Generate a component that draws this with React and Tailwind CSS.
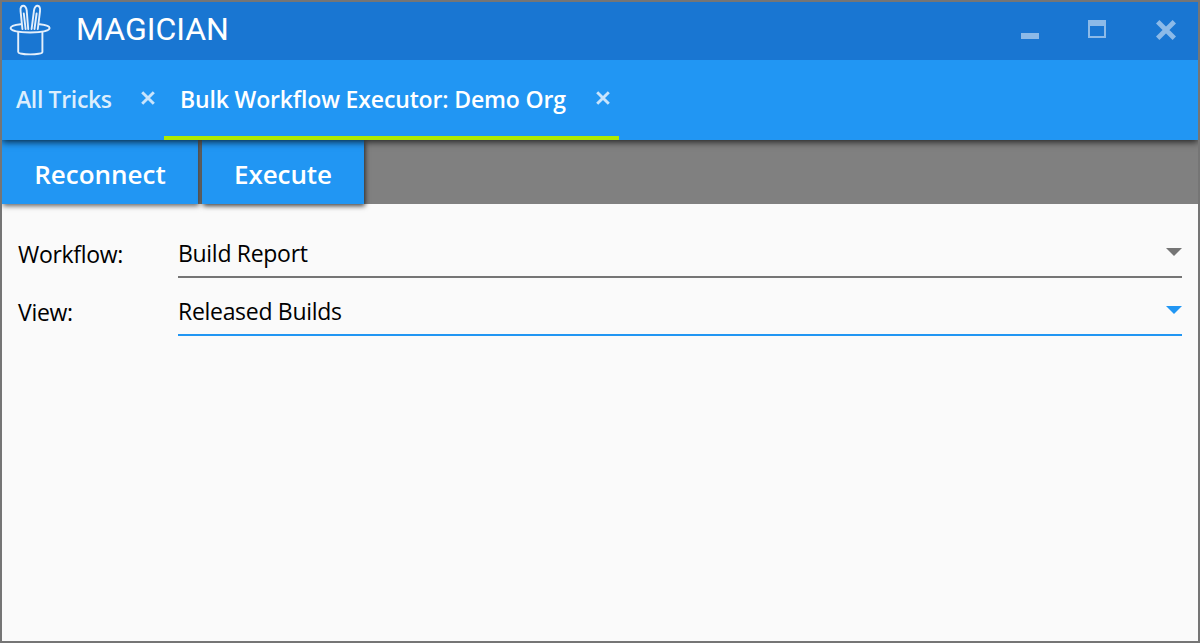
function HatIcon() {
  return (
    <svg className="-mt-[3px] h-[52px] w-[42px]" viewBox="0 0 42 52" fill="none" stroke="#e4effb" strokeWidth="1.9" strokeLinecap="round" strokeLinejoin="round">
      <path d="M13.4 25 11.6 7.3C10.8.4 17-.2 17.7 6.4L19.2 25" />
      <path d="M22.6 25 25 6.4C25.8-.2 31.8.4 31 7.3L28.8 25" />
      <path d="M14.8 9.5 16.6 25M27.6 9.5 25.5 25" />
      <path d="M11.7 20.3C5.5 21 1.6 22.2 1.6 24.1c0 2.7 8.5 4.4 19.6 4.4s19.4-1.7 19.4-4.4c0-1.9-3.7-3.1-9.9-3.8" />
      <path d="M9.2 28.2V48c0 3.2 24.2 3.2 24.2 0V28.2" />
    </svg>
  );
}

function TabClose() {
  return (
    <svg className="mb-[5px] h-[14px] w-[14px]" viewBox="0 0 14 14" stroke="#c8e4fc" strokeWidth="2.9">
      <path d="M1.2 1.2 12.8 12.8M12.8 1.2 1.2 12.8" />
    </svg>
  );
}

function TitleBar() {
  return (
    <header className="relative z-20 flex h-[58px] shrink-0 items-center justify-between bg-[#1976d2]">
      <div className="flex items-center pl-[7px]">
        <HatIcon />
        <h1 className="ml-[25px] -mt-1 font-[Roboto,sans-serif] text-[32px] leading-10 whitespace-nowrap text-white">MAGICIAN</h1>
      </div>
      <div className="flex items-center pr-[22px]">
        <button aria-label="Minimize" className="mt-[10px] mr-[49px] h-[6px] w-[18px] bg-[#8cbae8]" />
        <button aria-label="Maximize" className="mr-[50px] -mt-[4px] h-[18px] w-[18px] border-2 border-t-[6px] border-[#8cbae8]" />
        <button aria-label="Close" className="-mt-[2px]">
          <svg className="h-5 w-5" viewBox="0 0 20 20" stroke="#8cbae8" strokeWidth="4.8">
            <path d="M1.7 1.7 18.3 18.3M18.3 1.7 1.7 18.3" />
          </svg>
        </button>
      </div>
    </header>
  );
}

function Tab({ label, active, className }) {
  return (
    <div className={`flex items-center justify-between border-b-4 pt-1 ${active ? "border-[#aeea00] text-white" : "border-transparent text-[#dceefd]"} ${className}`}>
      <span className="-mt-[2px] whitespace-nowrap">{label}</span>
      <TabClose />
    </div>
  );
}

function Field({ label, value, focused }) {
  return (
    <div className="flex h-[58px]">
      <label className="w-[160px] pt-[6px] leading-8">{label}</label>
      <div className={`flex h-[46px] flex-1 justify-between border-b-2 ${focused ? "border-[#2196f3] text-[#2196f3]" : "border-[#757575] text-[#757575]"}`}>
        <span className="pt-[5px] leading-8 text-black">{value}</span>
        <svg className="mt-4 h-2 w-4" viewBox="0 0 16 8" fill="currentColor">
          <path d="M0 0H16L8 8Z" />
        </svg>
      </div>
    </div>
  );
}

export default function App() {
  return (
    <div className="flex h-[643px] w-[1200px] flex-col overflow-hidden border-2 border-[#757575] bg-[#fafafa] font-['Open_Sans','Noto_Sans',sans-serif]">
      <TitleBar />
      <nav className="relative z-10 flex h-20 shrink-0 bg-[#2196f3] text-[23px] font-[650] shadow-[0_2px_7px_rgba(0,0,0,0.75)]">
        <Tab label="All Tricks" className="w-[162px] pr-[9px] pl-[14px] tracking-[-0.35px]" />
        <Tab label="Bulk Workflow Executor: Demo Org" active className="w-[455px] pr-[9px] pl-4 tracking-[-0.15px]" />
      </nav>
      <div className="flex h-16 shrink-0 gap-1 bg-[#808080] text-[26px] font-[650] text-white">
        <button className="w-[196px] bg-[#2196f3] pt-[4px] shadow-[1px_2px_5px_rgba(0,0,0,0.6)]">Reconnect</button>
        <button className="w-[162px] bg-[#2196f3] pt-[4px] tracking-[-0.1px] shadow-[1px_2px_5px_rgba(0,0,0,0.75)]">Execute</button>
      </div>
      <main className="px-4 pt-7 text-[23px] tracking-[-0.3px] text-black">
        <Field label="Workflow:" value="Build Report" />
        <Field label="View:" value="Released Builds" focused />
      </main>
    </div>
  );
}
